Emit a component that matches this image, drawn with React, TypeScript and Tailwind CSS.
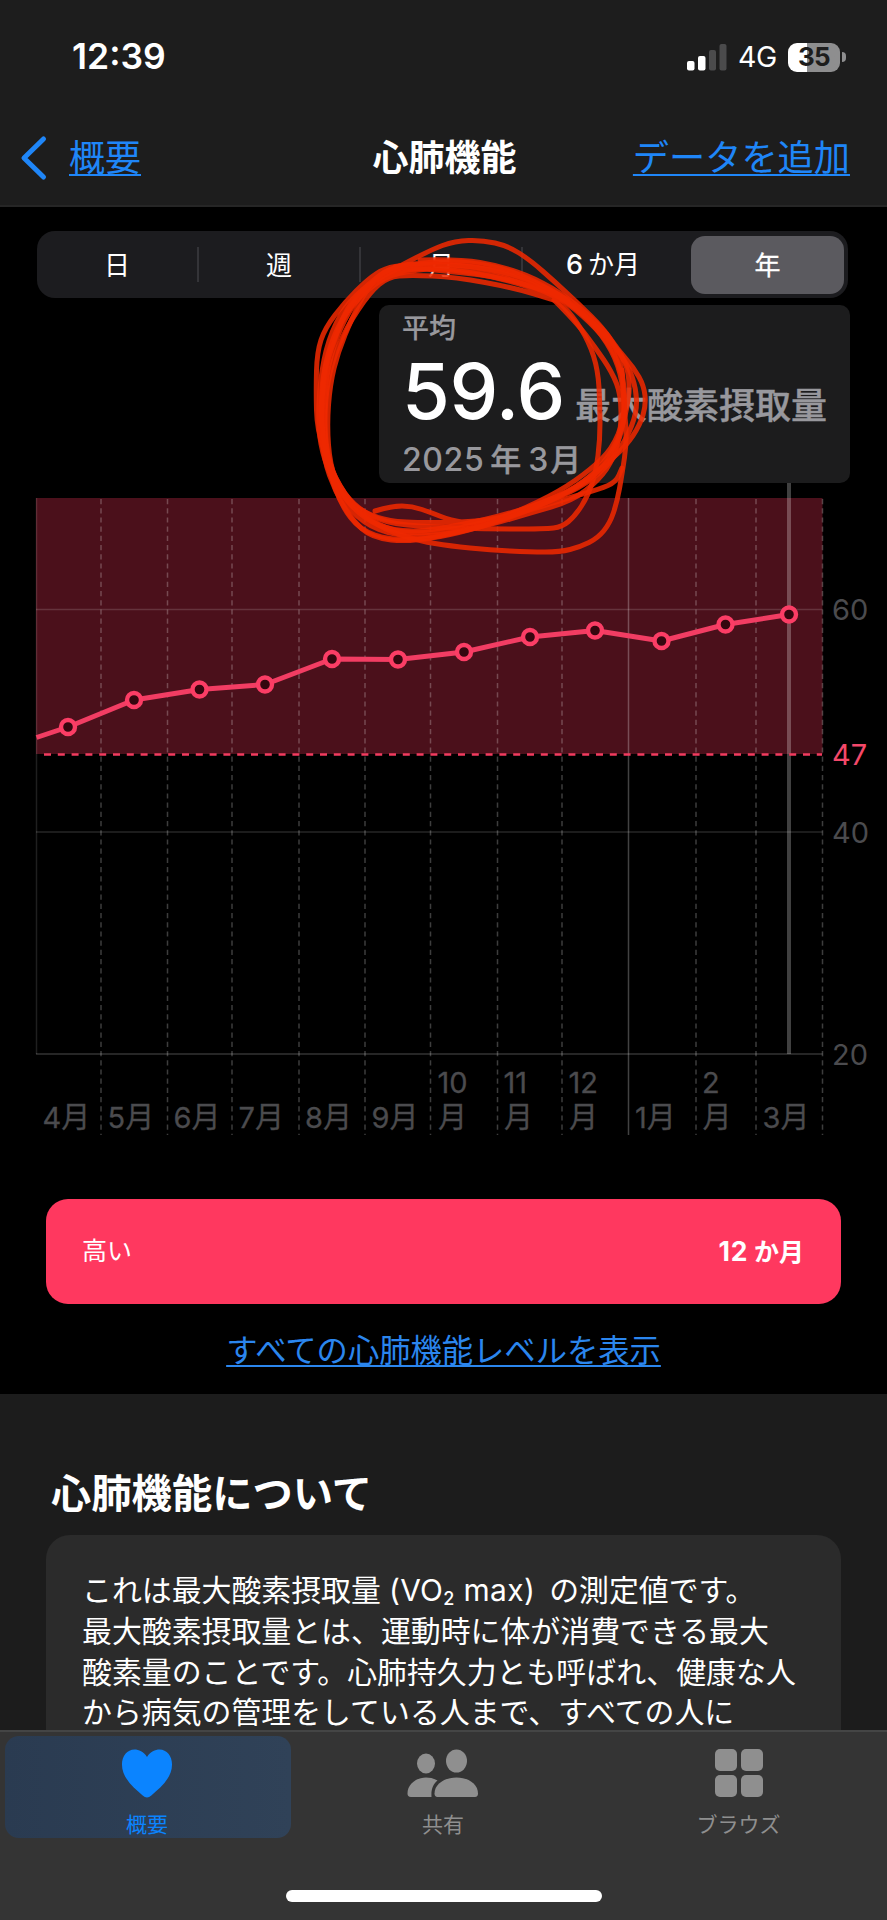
import React from 'react';

type Point = [number, number];

interface MonthLabel {
  x: number;
  text: string;
  stacked?: string; // number that sits above the label when it doesn't fit on one line
}

const GRID_LINES = [101, 167.5, 232, 299, 365, 430.5, 497.5, 562, 696, 756, 822.5];
const YEAR_LINE = 628.5;

const MONTHS: MonthLabel[] = [
  { x: 42.5, text: '4月' },
  { x: 107.5, text: '5月' },
  { x: 173.5, text: '6月' },
  { x: 238.5, text: '7月' },
  { x: 305, text: '8月' },
  { x: 371.5, text: '9月' },
  { x: 438, text: '月', stacked: '10' },
  { x: 504, text: '月', stacked: '11' },
  { x: 569, text: '月', stacked: '12' },
  { x: 635, text: '1月' },
  { x: 702.5, text: '月', stacked: '2' },
  { x: 762.5, text: '3月' },
];

const VALUES: Point[] = [
  [68, 727], [134, 700], [199.5, 689.5], [265, 684.5], [332, 659], [398, 659.5],
  [464, 652], [530, 637], [595, 630.5], [661.5, 641], [725.5, 624.5], [789, 614.5],
];

// One entry per turn of the pen
const SCRIBBLES: Point[][] = [
  [[402, 265], [430, 250], [455, 241], [482, 240], [508, 246], [530, 260], [555, 282], [580, 305], [603, 328], [618, 350], [634, 368], [644, 386], [646, 405], [640, 425], [626, 446], [604, 466], [575, 488], [545, 502], [500, 518], [455, 530], [410, 534], [378, 526], [350, 503], [330, 468], [317, 430], [316, 390], [317, 352], [325, 328], [345, 302], [368, 279], [385, 268], [405, 265]],
  [[395, 267], [430, 261], [470, 262], [505, 269], [535, 281], [568, 300], [592, 322], [612, 343], [628, 365], [636, 388], [637, 412], [626, 440], [607, 467], [580, 488], [540, 505], [500, 520], [455, 533], [410, 542], [372, 538], [352, 520], [335, 491], [324, 460], [321, 420], [323, 375], [332, 342], [350, 305], [372, 282], [400, 266]],
  [[375, 511], [392, 506], [412, 506], [432, 513], [450, 520], [478, 525], [515, 513], [560, 491], [590, 470], [612, 449], [624, 420], [624, 390], [616, 358], [597, 328], [570, 302], [535, 285], [495, 270], [455, 264], [415, 264], [385, 272], [358, 297], [340, 328], [328, 365], [324, 405], [325, 450], [335, 484], [352, 505], [376, 518], [405, 523], [480, 522], [520, 513], [565, 499], [600, 489], [616, 482], [622, 468]],
  [[388, 274], [412, 268], [450, 269], [490, 276], [528, 286], [555, 298], [573, 316], [589, 342], [598, 370], [600, 405], [600, 440], [596, 471], [588, 496], [575, 516], [562, 527], [545, 529], [485, 529], [430, 527], [385, 523], [355, 507], [335, 480], [325, 445], [325, 400], [331, 365], [346, 328], [370, 292], [388, 277], [410, 275], [455, 277], [515, 288], [554, 300]],
  [[554, 300], [576, 322], [595, 347], [612, 372], [621, 395], [621, 430], [614, 458], [599, 480], [572, 501], [530, 513], [490, 525], [440, 536], [395, 536], [363, 523], [340, 498], [326, 462], [321, 420], [322, 380], [330, 345], [345, 312], [377, 281], [405, 271], [450, 267], [505, 277], [560, 297], [590, 322], [612, 347], [622, 375]],
  [[622, 370], [624, 405], [627, 440], [622, 475], [617, 502], [610, 523], [598, 538], [580, 547], [560, 552], [530, 552], [490, 550], [450, 546], [420, 541], [385, 530], [358, 512], [337, 489], [324, 460], [318, 428], [320, 380], [328, 340], [344, 307], [368, 284], [400, 268]],
  [[420, 260], [460, 259], [500, 266], [535, 278], [568, 298], [595, 321], [614, 342], [622, 368], [625, 400], [623, 430], [610, 460], [585, 484], [550, 500], [505, 515], [460, 525], [420, 532], [385, 529], [360, 515], [341, 494], [330, 465], [327, 425], [330, 385], [338, 352], [352, 318], [366, 290], [384, 270], [405, 267], [455, 272], [500, 277], [550, 292]],
  [[550, 292], [568, 302], [594, 324], [610, 339], [626, 362], [630, 385], [626, 415], [615, 448], [592, 476], [562, 496], [515, 516], [470, 530], [430, 539], [390, 540], [360, 530], [341, 505], [329, 470], [323, 440], [321, 405], [326, 365], [337, 332], [350, 302], [376, 277], [400, 264], [430, 264], [470, 266], [510, 273], [545, 287], [568, 300]],
];

const BODY_LINES = [
  '最大酸素摂取量とは、運動時に体が消費できる最大',
  '酸素量のことです。心肺持久力とも呼ばれ、健康な人',
  'から病気の管理をしている人まで、すべての人に',
];

const smoothPath = (points: Point[]) => {
  let d = `M ${points[0][0]} ${points[0][1]}`;
  for (let i = 1; i < points.length - 1; i++) {
    const [x, y] = points[i];
    const [nx, ny] = points[i + 1];
    d += ` Q ${x} ${y} ${(x + nx) / 2} ${(y + ny) / 2}`;
  }
  const last = points[points.length - 1];
  return `${d} L ${last[0]} ${last[1]}`;
};

const StatusBar: React.FC = () => (
  <div className="flex h-[114px] items-center justify-between pl-[72px] pr-[41px] text-white">
    <span className="text-[35.5px] font-semibold leading-none">12:39</span>
    <div className="flex items-center">
      <svg width="41" height="27" viewBox="0 0 41 27" className="block">
        <rect x="0" y="17" width="7.5" height="9.5" rx="2" fill="#fff" />
        <rect x="11" y="12" width="7.5" height="14.5" rx="2" fill="#fff" />
        <rect x="22" y="6" width="7" height="20.5" rx="2" fill="#4b4b4c" />
        <rect x="32.5" y="0" width="7" height="26.5" rx="2" fill="#4b4b4c" />
      </svg>
      <span className="ml-[10px] w-[50px] text-[28.5px] leading-none tracking-[-0.3px]">4G</span>
      <div className="flex h-[29px] w-[52px] items-center justify-center rounded-[9px] bg-gradient-to-r from-white from-[37%] to-[#8e8e8f] to-[37%] text-[26px] font-bold leading-none tracking-[-0.8px] text-[#1d1d1d]">
        35
      </div>
      <div className="ml-[2px] h-[10px] w-[4px] rounded-r-full bg-[#8e8e8f]" />
    </div>
  </div>
);

const NavBar: React.FC = () => (
  <div className="flex h-[88px] items-center justify-between pl-[20px] pr-[37px] text-[36px] leading-[44px]">
    <div className="flex w-[230px] items-center text-[#1f86f8]">
      <svg width="28" height="46" viewBox="0 0 28 46" fill="none" stroke="currentColor" strokeWidth="5" strokeLinecap="round" strokeLinejoin="round">
        <path d="M23.5 4 4 23 23.5 42" />
      </svg>
      <span className="ml-[21px] underline decoration-2 underline-offset-[3px]">概要</span>
    </div>
    <span className="ml-[6px] font-bold text-white">心肺機能</span>
    <span className="whitespace-nowrap text-[36.2px] text-[#1f86f8] underline decoration-2 underline-offset-[3px]">データを追加</span>
  </div>
);

const RangePicker: React.FC = () => (
  <div className="ml-[37px] flex h-[67px] w-[811px] items-center rounded-[18px] bg-[#1c1c1f] text-[26px] text-white">
    {['日', '週', '月', '6か月'].map((label, index) => (
      <React.Fragment key={label}>
        <div className="w-[160px] whitespace-nowrap pt-[1px] text-center">
          {label === '6か月' ? <><span className="mr-[5px] text-[27px] font-medium">6</span>か月</> : label}
        </div>
        {index < 3 && <div className="h-[35px] w-[2px] bg-[#343438]" />}
      </React.Fragment>
    ))}
    <div className="ml-[8px] flex h-[58px] w-[153px] items-center justify-center rounded-[14px] bg-[#5b5a5f] pt-[1px] [-webkit-text-stroke:0.3px]">年</div>
  </div>
);

const Summary: React.FC = () => (
  <div className="ml-[379px] mt-[7px] h-[178px] w-[471px] rounded-[10px] bg-[#1c1c1d] pl-[23px] pt-[8px] font-medium text-[#98989d]">
    <div className="text-[27px] leading-[32px] [-webkit-text-stroke:0.2px]">平均</div>
    <div className="flex h-[97px] items-baseline whitespace-nowrap leading-[93px]">
      <span className="w-[173px] text-[77.5px] font-medium tracking-[-0.5px] text-white">59.6</span>
      <span className="text-[36px] [-webkit-text-stroke:0.4px]">最大酸素摂取量</span>
    </div>
    <div className="flex h-[36px] items-baseline text-[32px] leading-[36px]">
      <span className="tracking-[0.6px]">2025</span>
      <span className="ml-[6px] text-[31px] [-webkit-text-stroke:0.4px]">年</span>
      <span className="ml-[7px]">3</span>
      <span className="ml-[2px] text-[31px] [-webkit-text-stroke:0.4px]">月</span>
    </div>
  </div>
);

const TrendChart: React.FC = () => (
  <svg width="887" height="657" viewBox="0 483 887 657" className="block">
    <rect x="36" y="498" width="786.5" height="256" fill="#4b101b" />
    <g stroke="#fff" strokeOpacity="0.15" strokeWidth="1.5">
      <path d="M36 609.5H822.5" />
      <path d="M36 832H822.5" />
      <path d="M36 1054H822.5" strokeWidth="2" />
      <path d="M36.5 498V1054" strokeOpacity="0.12" />
      <path d={`M${YEAR_LINE} 498V1135`} strokeOpacity="0.26" />
      {GRID_LINES.map((x) => (
        <path key={x} d={`M${x} 499V1135`} strokeDasharray="5.2 4" strokeOpacity="0.24" />
      ))}
    </g>
    <path d="M789 483V1054" stroke="#fff" strokeOpacity="0.25" strokeWidth="4" />
    <path d="M44 754.5H822" stroke="#f23b5f" strokeWidth="2.5" strokeDasharray="7 6.8" />
    <polyline
      points={`36.5,737.5 ${VALUES.map((p) => p.join(',')).join(' ')}`}
      fill="none"
      stroke="#f23d63"
      strokeWidth="5"
      strokeLinejoin="round"
    />
    {VALUES.map(([x, y]) => (
      <circle key={x} cx={x} cy={y} r="7" fill="#35070f" stroke="#fb3d65" strokeWidth="4.4" />
    ))}
    <g fontSize="29" fill="#4b4b4e">
      <text x="832" y="620">60</text>
      <text x="832" y="764.5" fill="#f4486a">47</text>
      <text x="832" y="842.5">40</text>
      <text x="832" y="1065">20</text>
      {MONTHS.map(({ x, text, stacked }) => (
        <g key={x} stroke="#4b4b4e" strokeWidth="0.3">
          {stacked && <text x={x - 0.5} y="1093">{stacked}</text>}
          <text x={x} y="1128">{text}</text>
        </g>
      ))}
    </g>
  </svg>
);

const AboutSection: React.FC = () => (
  <section className="h-[336px] overflow-hidden bg-[#1c1c1c] pt-[76px] text-white">
    <h2 className="pl-[51px] text-[40.3px] font-bold leading-[48px]">心肺機能について</h2>
    <div className="ml-[46px] mt-[17px] h-[195px] w-[795px] whitespace-nowrap rounded-t-[24px] bg-[#2b2b2b] pl-[36px] pt-[35px] text-[29.9px] leading-[40.8px]">
      <p className="flex h-[40.8px] items-baseline">
        これは最大酸素摂取量
        <span className="ml-[8px] tracking-[0.35px]">(VO<span className="relative top-[4px] text-[18px] font-medium">2</span> max)</span>
        <span className="ml-[14px]">の測定値です。</span>
      </p>
      {BODY_LINES.map((line) => (
        <p key={line}>{line}</p>
      ))}
    </div>
  </section>
);

const TabBar: React.FC = () => (
  <nav className="h-[190px] border-t-2 border-[#444545] bg-[#343434] text-[21px] leading-[26px] text-[#8f8f8f]">
    <div className="flex h-[110px] pl-[5px] pt-[4px]">
      <div className="flex h-[102px] w-[286px] flex-col items-center rounded-[14px] bg-gradient-to-r from-[#2a3b51] to-[#304258] pr-[2px] pt-[13px] text-[#0b84ff]">
        <svg width="52" height="50" viewBox="0 0 54 50" preserveAspectRatio="none" fill="currentColor">
          <path d="M27 8C23.5 2.5 18.5 .5 14 .5C6.5 .5 1 7 1 15.5C1 29 13 38.5 22.5 46.5C25.5 49 28.5 49 31.5 46.5C41 38.5 53 29 53 15.5C53 7 47.5 .5 40 .5C35.5 .5 30.5 2.5 27 8Z" />
        </svg>
        <span className="mt-[13px]">概要</span>
      </div>
      <div className="flex w-[304px] flex-col items-center pt-[13px]">
        <svg width="72" height="50" viewBox="0 0 72 50" fill="currentColor">
          <ellipse cx="19" cy="14.5" rx="9" ry="10" />
          <ellipse cx="49.5" cy="12" rx="10.5" ry="11.5" />
          <path d="M4 48C1.5 48 .5 46.5 .5 44.5C.5 35.5 9 28.5 19 28.5C23 28.5 27 29.5 30.5 31.5C26 35.5 24 40 24.5 48Z" />
          <path d="M30.5 48C28.5 48 27.5 46.5 27.5 44.5C27.5 35.5 37 28.5 49.5 28.5C62 28.5 71 35.5 71 44.5C71 46.5 70 48 68 48Z" />
        </svg>
        <span className="mt-[13px]">共有</span>
      </div>
      <div className="flex w-[287px] flex-col items-center pt-[13px]">
        <svg width="48" height="50" viewBox="0 0 48 50" fill="currentColor">
          <rect x="0" y="0" width="22" height="22" rx="5" />
          <rect x="26" y="0" width="22" height="22" rx="5" />
          <rect x="0" y="26" width="22" height="22" rx="5" />
          <rect x="26" y="26" width="22" height="22" rx="5" />
        </svg>
        <span className="mt-[13px]">ブラウズ</span>
      </div>
    </div>
    <div className="mx-auto mt-[48px] h-[12px] w-[316px] rounded-full bg-white" />
  </nav>
);

const App: React.FC = () => {
  return (
    <div className="relative h-[1920px] w-[887px] overflow-hidden bg-black font-['Inter','Noto_Sans_CJK_JP',sans-serif]">
      <header className="h-[207px] border-b-2 border-[#262626] bg-[#1d1d1d]">
        <StatusBar />
        <NavBar />
      </header>

      <main>
        <div className="h-[1187px] pt-[24px]">
          <RangePicker />
          <Summary />
          <TrendChart />
          <div className="ml-[46px] mt-[59px] flex h-[105px] w-[795px] items-center justify-between rounded-[22px] bg-[#ff385f] pl-[36px] pr-[37px] text-[25px] text-white">
            <span>高い</span>
            <span className="font-bold"><span className="text-[26.5px] tracking-[0.7px]">12</span> か月</span>
          </div>
          <div className="mt-[25px] text-center text-[31.3px] leading-[44px] text-[#2b86ee]">
            <span className="underline decoration-2 underline-offset-[3px]">すべての心肺機能レベルを表示</span>
          </div>
        </div>
        <AboutSection />
      </main>

      <TabBar />

      {/* Hand-drawn marker circle around the average */}
      <svg width="887" height="1920" className="pointer-events-none absolute left-0 top-0" fill="none" stroke="#ee2800" strokeWidth="5" strokeLinecap="round" strokeLinejoin="round">
        {SCRIBBLES.map((points, index) => (
          <path key={index} d={smoothPath(points)} strokeOpacity="0.87" />
        ))}
      </svg>
    </div>
  );
};

export default App;
